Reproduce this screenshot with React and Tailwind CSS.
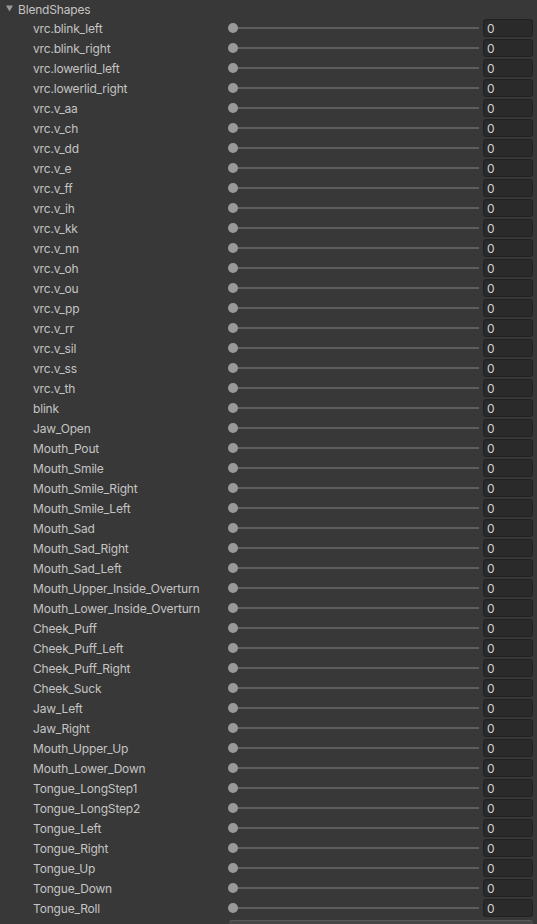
const names = [
  "vrc.blink_left","vrc.blink_right","vrc.lowerlid_left","vrc.lowerlid_right","vrc.v_aa","vrc.v_ch","vrc.v_dd","vrc.v_e","vrc.v_ff","vrc.v_ih","vrc.v_kk","vrc.v_nn","vrc.v_oh","vrc.v_ou","vrc.v_pp","vrc.v_rr","vrc.v_sil","vrc.v_ss","vrc.v_th","blink","Jaw_Open","Mouth_Pout","Mouth_Smile","Mouth_Smile_Right","Mouth_Smile_Left","Mouth_Sad","Mouth_Sad_Right","Mouth_Sad_Left","Mouth_Upper_Inside_Overturn","Mouth_Lower_Inside_Overturn","Cheek_Puff","Cheek_Puff_Left","Cheek_Puff_Right","Cheek_Suck","Jaw_Left","Jaw_Right","Mouth_Upper_Up","Mouth_Lower_Down","Tongue_LongStep1","Tongue_LongStep2","Tongue_Left","Tongue_Right","Tongue_Up","Tongue_Down","Tongue_Roll"
];

function Row({ name }) {
  return (
    <div className="flex h-5 items-center">
      <div className="w-[228px] shrink-0 pl-[33px] pt-[2px] text-[12px] tracking-[-0.18px] text-[#c4c4c4] whitespace-nowrap">{name}</div>
      <div className="relative flex h-full w-[251px] shrink-0 items-center">
        <div className="h-[2px] w-full bg-[#5e5e5e] ml-[5px]" />
        <div className="absolute left-0 top-[5px] h-[10px] w-[10px] rounded-full bg-[#999999]" />
      </div>
      <div className="ml-[4px] flex h-[18px] w-[50px] shrink-0 items-center rounded-[3px] border border-[#212121] bg-[#2a2a2a] pl-[3px] pt-[2px] text-[12px] text-[#d2d2d2]">0</div>
    </div>
  );
}

export default function App() {
  return (
    <div className="h-[924px] w-[537px] overflow-hidden bg-[#383838]" style={{ fontFamily: "Inter, 'Noto Sans', sans-serif" }}>
      <div className="flex h-[18px] items-center">
        <svg width="18" height="18" viewBox="0 0 18 18" className="shrink-0">
          <path d="M6 5.5 L13 5.5 L9.5 11.5 Z" fill="#999999" />
        </svg>
        <span className="pt-[1px] text-[12px] tracking-[-0.18px] text-[#c4c4c4]">BlendShapes</span>
      </div>
      {names.map((n) => (
        <Row key={n} name={n} />
      ))}
      <div className="mt-[2px] ml-[229px] h-[20px] w-[304px] rounded-t-[3px] border-t border-[#5a5a5a] bg-[#474747]" />
    </div>
  );
}
